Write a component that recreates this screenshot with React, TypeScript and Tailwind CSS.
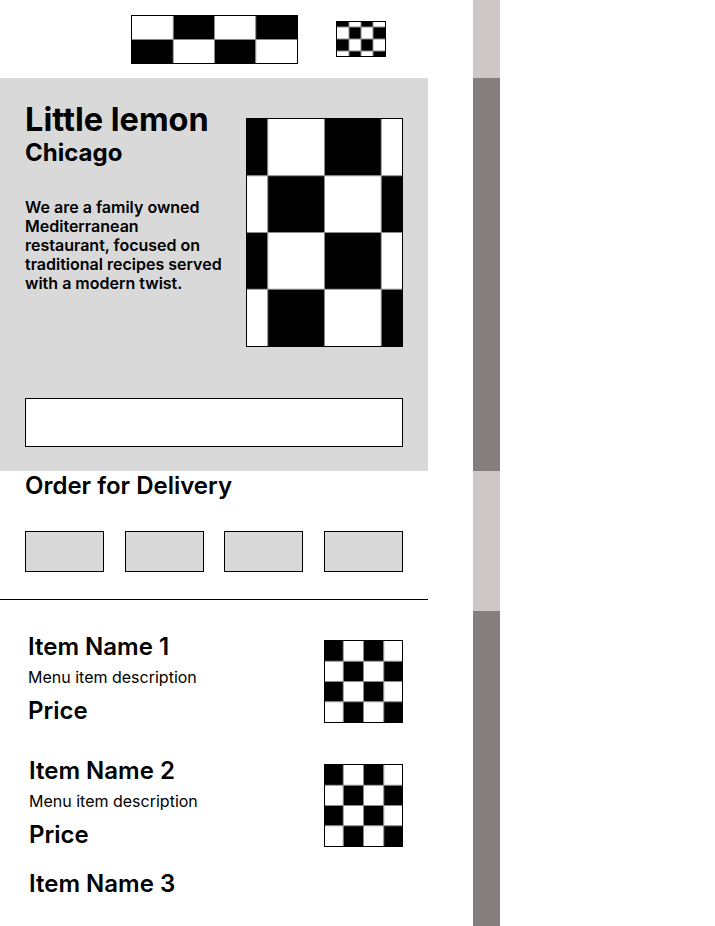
import React from "react";

type CheckerProps = {
  cols: number;
  rows: number;
  darkFirst?: boolean;
  fit?: "slice" | "none";
  className?: string;
};

// placeholder picture: a checkerboard with thin grey seams
function Checker({ cols, rows, darkFirst = true, fit = "slice", className }: CheckerProps) {
  const cells = [];
  for (let r = 0; r < rows; r++) {
    for (let c = 0; c < cols; c++) {
      const dark = (r + c) % 2 === 0 ? darkFirst : !darkFirst;
      cells.push(
        <rect key={`${r}-${c}`} x={c} y={r} width={1} height={1} fill={dark ? "#000" : "#fff"} />
      );
    }
  }
  const lines = [];
  for (let c = 1; c < cols; c++) {
    lines.push(
      <line key={`v${c}`} x1={c} y1={0} x2={c} y2={rows} stroke="#8c8c8c" strokeWidth={1} vectorEffect="non-scaling-stroke" />
    );
  }
  for (let r = 1; r < rows; r++) {
    lines.push(
      <line key={`h${r}`} x1={0} y1={r} x2={cols} y2={r} stroke="#8c8c8c" strokeWidth={1} vectorEffect="non-scaling-stroke" />
    );
  }
  return (
    <div className={`border border-black bg-white overflow-hidden ${className ?? ""}`}>
      <svg
        viewBox={`0 0 ${cols} ${rows}`}
        preserveAspectRatio={fit === "none" ? "none" : "xMidYMid slice"}
        className="block w-full h-full"
      >
        {cells}
        {lines}
      </svg>
    </div>
  );
}

function MenuItem({ name, indent }: { name: string; indent: string }) {
  return (
    <div className="flex justify-between pr-[25px]">
      <div className={`flex flex-col ${indent}`}>
        <h3 className="text-[24px] leading-[28px] font-semibold">{name}</h3>
        <p className="mt-[6px] text-[16px] leading-[20px]">Menu item description</p>
        <p className="mt-[10px] text-[24px] leading-[28px] font-semibold">Price</p>
      </div>
      <Checker cols={4} rows={4} className="mt-[7px] w-[79px] h-[83px]" />
    </div>
  );
}

export default function App() {
  return (
    <div className="flex h-[926px] overflow-hidden bg-white text-black font-['Inter',sans-serif]">
      <main className="w-[428px] shrink-0 flex flex-col">
        <header className="h-[78px] flex items-start pl-[131px] pt-[15px] gap-[38px]">
          <Checker cols={4} rows={2} darkFirst={false} fit="none" className="w-[167px] h-[49px]" />
          <Checker cols={4} rows={4} className="mt-[6px] w-[50px] h-[36px]" />
        </header>

        <section className="h-[393px] bg-[#d9d9d9] px-[25px] pt-[26px] flex flex-col">
          <div className="flex justify-between">
            <div className="w-[200px] flex flex-col">
              <h1 className="text-[32.5px] leading-[32px] font-bold">Little lemon</h1>
              <h2 className="mt-[5px] text-[24px] leading-[24px] font-bold">Chicago</h2>
              <p className="mt-[33px] text-[16px] leading-[19px] font-semibold">
                We are a family owned Mediterranean restaurant, focused on traditional recipes
                served with a modern twist.
              </p>
            </div>
            <Checker cols={4} rows={4} className="mt-[14px] w-[157px] h-[229px]" />
          </div>
          <div className="mt-[51px] h-[49px] border border-black bg-white" />
        </section>

        <h2 className="mt-[1px] px-[25px] text-[24px] leading-[28px] font-semibold">
          Order for Delivery
        </h2>
        <div className="mt-[31px] px-[25px] flex justify-between">
          {[0, 1, 2, 3].map((i) => (
            <button key={i} className="w-[79px] h-[41px] border border-black bg-[#d9d9d9]" />
          ))}
        </div>
        <hr className="mt-[27px] border-0 h-px bg-black" />

        <div className="mt-[33px] flex flex-col">
          <MenuItem name="Item Name 1" indent="pl-[28px]" />
          <div className="mt-[32px]">
            <MenuItem name="Item Name 2" indent="pl-[29px]" />
          </div>
          <h3 className="mt-[21px] pl-[29px] text-[24px] leading-[28px] font-semibold">
            Item Name 3
          </h3>
        </div>
      </main>

      <aside className="ml-[45px] w-[27px] shrink-0 flex flex-col">
        <div className="h-[78px] bg-[#cdc7c7]" />
        <div className="h-[393px] bg-[#847f7e]" />
        <div className="h-[140px] bg-[#cdc7c7]" />
        <div className="flex-1 bg-[#847f7e]" />
      </aside>
    </div>
  );
}
